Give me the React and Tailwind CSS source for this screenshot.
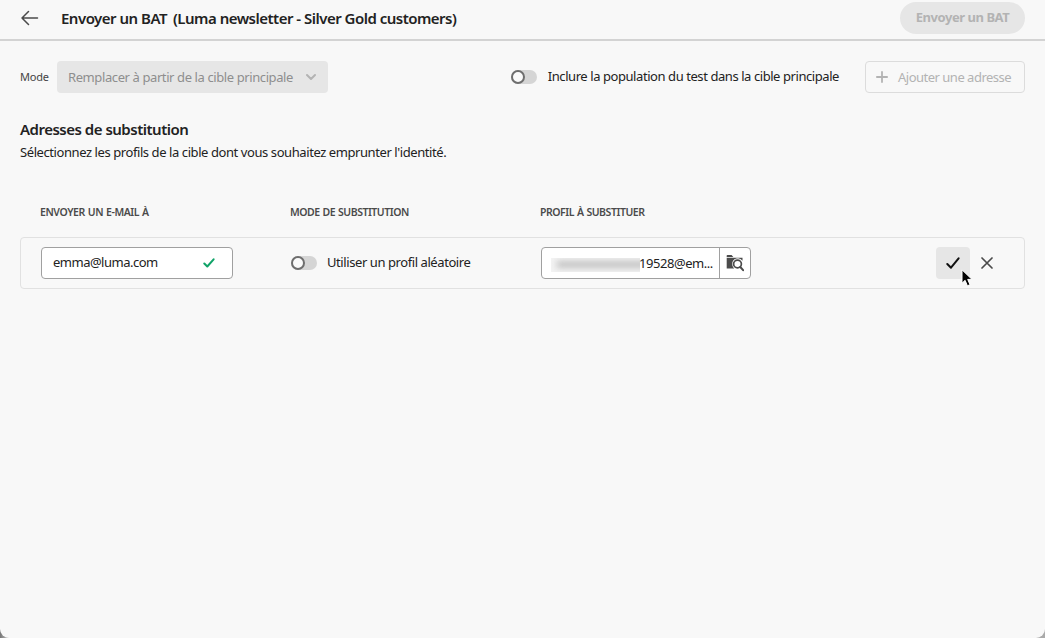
const HEADINGS = [
  { text: 'ENVOYER UN E-MAIL À', className: 'w-[250px] tracking-[-0.42px] [word-spacing:0.6px]' },
  { text: 'MODE DE SUBSTITUTION', className: 'w-[250px] tracking-[-0.47px] [word-spacing:0.6px]' },
  { text: 'PROFIL À SUBSTITUER', className: 'tracking-[-0.45px] [word-spacing:0.6px]' },
];

function Toggle() {
  return (
    <span className="flex h-[14px] w-[26px] shrink-0 rounded-full bg-[#d5d5d5]">
      <span className="size-[14px] rounded-full border-2 border-[#6e6e6e] bg-[#fafafa]" />
    </span>
  );
}

function BackArrow() {
  return (
    <svg className="h-[16px] w-[18px]" viewBox="0 0 18 16" fill="none" stroke="#4b4b4b" strokeWidth="1.5" strokeLinecap="round" strokeLinejoin="round">
      <path d="M16.5 8H1M7.5 1.5L1 8l6.5 6.5" />
    </svg>
  );
}

function FolderSearch() {
  return (
    <svg className="h-[18px] w-[18px]" viewBox="0 0 18 18">
      <path d="M.7 3V1.700Q.7 1 1.400 1H5.600L7.300 3z" fill="#4b4b4b" />
      <path d="M.7 3.800h15.800v3a5.600 5.600 0 0 0-10.300 3c0 2 .8 3.600 2 4.700H.7z" fill="#4b4b4b" />
      <circle cx="11.500" cy="10" r="3.900" fill="#fff" stroke="#4b4b4b" strokeWidth="1.700" />
      <path d="M14.300 13l2.800 3.200" stroke="#4b4b4b" strokeWidth="2" strokeLinecap="round" />
    </svg>
  );
}

function Header() {
  return (
    <header className="flex h-[41px] items-start border-b-2 border-[#d3d3d3] pr-5 pl-[21px]">
      <button className="mt-[10px]"><BackArrow /></button>
      <h1 className="mt-[6px] ml-[22px] flex gap-[6px] text-[15px] leading-6 font-semibold text-[#222]">
        <span className="tracking-[-0.5px]">Envoyer un BAT</span>
        <span className="tracking-[-0.51px]">(Luma newsletter - Silver Gold customers)</span>
      </h1>
      <button className="mt-[2px] ml-auto h-8 w-[125px] rounded-full bg-[#e6e6e6] pb-px text-[13px] leading-[29px] font-bold tracking-[-0.45px] text-[#b3b3b3]">
        Envoyer un BAT
      </button>
    </header>
  );
}

function Toolbar() {
  return (
    <div className="flex h-8 items-center">
      <span className="w-[37px] text-[11px] tracking-[-0.2px] text-[#444]">Mode</span>
      <button className="flex h-8 w-[271px] items-center justify-between rounded bg-[#e6e6e6] pr-3 pl-[11px] text-[13px] tracking-[-0.4px] text-[#8e8e8e]">
        <span className="pt-px">Remplacer à partir de la cible principale</span>
        <svg className="h-[8px] w-[10px]" viewBox="0 0 10 8" fill="none" stroke="#b3b3b3" strokeWidth="2" strokeLinecap="round" strokeLinejoin="round">
          <path d="M1 2l4 4 4-4" />
        </svg>
      </button>
      <label className="ml-auto flex items-center gap-[11px] text-[13px] tracking-[-0.43px]">
        <Toggle />
        <span>Inclure la population du test dans la cible principale</span>
      </label>
      <button className="ml-[26px] flex h-8 w-40 items-center rounded border border-[#dcdcdc] pl-[10px] text-[13px] tracking-[-0.5px] text-[#b3b3b3]">
        <svg className="mr-[10px] h-3 w-3" viewBox="0 0 12 12" fill="none" stroke="#b3b3b3" strokeWidth="1.8" strokeLinecap="round">
          <path d="M6 .9v10.200M.9 6h10.200" />
        </svg>
        <span className="pt-px">Ajouter une adresse</span>
      </button>
    </div>
  );
}

function AddressRow() {
  return (
    <div className="flex h-[52px] items-center rounded border border-[#e1e1e1] px-5 text-[13px]">
      <div className="flex w-[250px]">
        <div className="flex h-8 w-[192px] items-center justify-between rounded border border-[#a0a0a0] bg-white pr-[17px] pl-[11px] tracking-[-0.5px]">
          <span>emma@luma.com</span>
          <svg className="h-[10px] w-3" viewBox="0 0 12 10" fill="none" stroke="#10a368" strokeWidth="2" strokeLinecap="round" strokeLinejoin="round">
            <path d="M1.300 5.500l3 3L10.600 1.300" />
          </svg>
        </div>
      </div>
      <label className="flex w-[250px] items-center gap-[10px] tracking-[-0.42px]">
        <Toggle />
        <span>Utiliser un profil aléatoire</span>
      </label>
      <div className="flex h-8 w-[210px] overflow-hidden rounded border border-[#a0a0a0] bg-white">
        <div className="flex w-[178px] items-center border-r border-[#a0a0a0] pl-[9px]">
          <span className="mt-[3px] flex h-[14px] w-[89px] shrink-0 items-center overflow-hidden bg-[#f3f3f3]">
            <span className="h-[7px] w-[100px] shrink-0 translate-x-[6px] bg-[#c2c2c2] blur-[3px]" />
          </span>
          <span className="-ml-px mt-[2px] tracking-[-0.45px]">19528@em...</span>
        </div>
        <button className="flex flex-1 items-center justify-center"><FolderSearch /></button>
      </div>
      <div className="relative ml-auto flex items-center">
        <button className="flex h-8 w-[34px] items-center justify-center rounded bg-[#e6e6e6]">
          <svg className="h-3 w-[14px]" viewBox="0 0 14 12" fill="none" stroke="#111" strokeWidth="2" strokeLinecap="round" strokeLinejoin="round">
            <path d="M1.300 7l3.700 3.700L12.600 1.300" />
          </svg>
        </button>
        <button className="flex h-8 w-[34px] items-center justify-center">
          <svg className="h-3 w-3" viewBox="0 0 12 12" fill="none" stroke="#4b4b4b" strokeWidth="1.700" strokeLinecap="round">
            <path d="M1 1l10 10M11 1L1 11" />
          </svg>
        </button>
        <svg className="absolute top-[22px] left-[25px] h-[18px] w-[12px]" viewBox="0 0 12 18">
          <path d="M1 .8v13.400l3.100-2.900 2.300 5.500 2.600-1.100-2.300-5.300H11z" fill="#000" stroke="#fff" strokeWidth="1" />
        </svg>
      </div>
    </div>
  );
}

export default function App() {
  return (
    <div className="h-[638px] w-[1045px] bg-[linear-gradient(90deg,#777,#bbb_8px,#aaa)] font-['Noto_Sans',sans-serif] text-[#222]">
      <div className="h-full overflow-hidden rounded-b-[9px] bg-[#f8f8f8]">
        <Header />
        <main className="px-5 pt-5">
          <Toolbar />
          <h2 className="mt-6 text-[15px] leading-6 font-semibold tracking-[-0.5px]">Adresses de substitution</h2>
          <p className="text-[13px] leading-[22px] tracking-[-0.42px]">Sélectionnez les profils de la cible dont vous souhaitez emprunter l'identité.</p>
          <div className="mt-[41px] flex pl-5 text-[10.5px] leading-4 font-semibold text-[#4b4b4b]">
            {HEADINGS.map((h) => (
              <span key={h.text} className={h.className}>{h.text}</span>
            ))}
          </div>
          <div className="mt-[17px]"><AddressRow /></div>
        </main>
      </div>
    </div>
  );
}
